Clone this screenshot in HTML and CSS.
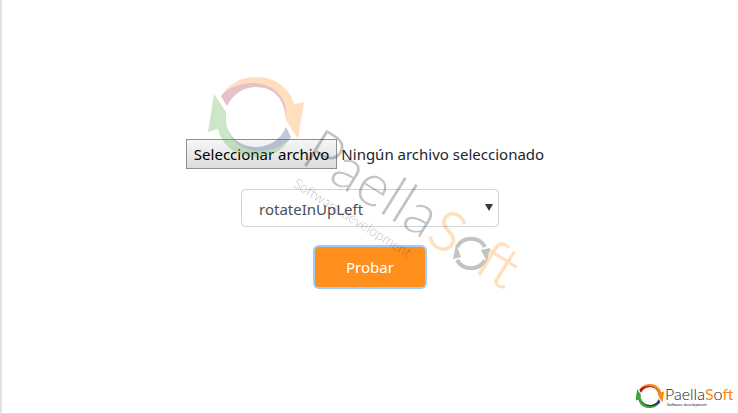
FILE: index.html
```html
<!DOCTYPE html>
<html lang="es">

<head>
  <meta charset="UTF-8">
  <meta name="viewport" content="width=device-width, initial-scale=1.0">
  <title>PaellaSoft</title>
  <link rel="stylesheet" href="styles.css">
</head>

<body>
  <main class="page">
    <form class="demo">
      <!-- Archivo -->
      <div class="file-field">
        <label class="file-button" for="archivo">Seleccionar archivo</label>
        <span class="file-name">Ningún archivo seleccionado</span>
        <input class="file-input" type="file" id="archivo">
      </div>

      <!-- Animación -->
      <div class="select-field">
        <select class="select" id="animacion" aria-label="Animación">
          <option selected>rotateInUpLeft</option>
          <option>rotateInUpRight</option>
          <option>rotateInDownLeft</option>
          <option>rotateInDownRight</option>
        </select>
      </div>

      <button class="btn" type="button">Probar</button>

      <!-- Logo animado -->
      <svg class="logo-big" viewBox="200 70 340 230" aria-hidden="true">
        <defs>
          <g id="ring">
            <path fill="#ff8a12" d="M221 96C228 84 241 77 256 77C275 77 290 88 294 104L304 102L298 139L286 120C288 99 274 87 256 87C243 87 233 94 227 106Z" />
            <path fill="#a01c38" d="M221 96C231 85 244 83 255 83C269 84 279 91 283 100Q287 108 286 120C285 99 274 87 256 87C243 87 233 94 227 106Z" />
            <path fill="#3fa535" d="M214 94L226 112V122C228 137 241 147 256 147C271 147 282 141 291 137C284 150 271 157 256 157C237 157 222 146 218 129L208 132Z" />
            <path fill="#1c3670" d="M226 122C228 137 240 147 256 147C270 147 281 139 286 127L291 137C284 146 271 151 257 151C241 150 229 141 226 122Z" />
          </g>
          <g id="arrows">
            <path fill="none" stroke="currentColor" stroke-width="4" d="M457 247A16 16 0 0 1 485 247M485 260A16 16 0 0 1 457 260" />
            <path fill="currentColor" d="M456 244L461 257L453 259ZM487 262L481 250L490 248Z" />
          </g>
        </defs>
        <use href="#ring" />
        <g transform="translate(304 165) rotate(32)">
          <text class="word" x="-6" y="0">Paella</text>
          <text class="word word-accent" x="142" y="0">S</text>
          <text class="word word-accent" x="199" y="0">ft</text>
          <text class="tagline" x="1" y="24">Software development</text>
        </g>
        <use href="#arrows" />
      </svg>
    </form>

    <!-- Logo fijo -->
    <footer class="footer">
      <svg class="logo-small" viewBox="0 0 98 28" role="img" aria-label="PaellaSoft">
        <use href="#ring" transform="translate(-63 -21) scale(.3)" />
        <text class="small-word" x="29" y="18">Paella<tspan class="small-accent">S</tspan>o<tspan class="small-accent">ft</tspan></text>
        <text class="small-tagline" x="31" y="24">Software development</text>
      </svg>
    </footer>
  </main>
</body>

</html>
```

FILE: styles.css
```css
* {
  box-sizing: border-box;
}

body {
  margin: 0;
  background: #fff;
  color: #212529;
  font-family: "Noto Sans", "Open Sans", sans-serif;
  font-size: 15px;
  line-height: 24px;
}

.page {
  display: flex;
  flex-direction: column;
  min-height: 100vh;
  border-left: 2px solid #e3e3e3;
  border-bottom: 1px solid #dcdcdc;
}

/* Formulario */
.demo {
  position: relative;
  flex: 1;
  display: flex;
  flex-direction: column;
  align-items: center;
  gap: 20px;
  padding-top: 139px;
}

.file-field {
  position: relative;
  display: flex;
  align-items: center;
  gap: 4px;
  margin-right: 10px;
}

.file-button {
  padding: 2px 7px;
  border: 1px solid #8f8f8f;
  background: linear-gradient(#f6f6f6, #dcdcdc);
  color: #000;
}

/* El input real queda encima, transparente */
.file-input {
  position: absolute;
  inset: 0;
  width: 100%;
  opacity: 0;
  cursor: pointer;
}

.select-field {
  position: relative;
  width: 258px;
}

.select-field::after {
  content: "";
  position: absolute;
  top: 15px;
  right: 6px;
  border: 4px solid transparent;
  border-top: 7px solid #343a40;
  border-bottom: 0;
  pointer-events: none;
}

.select {
  appearance: none;
  width: 100%;
  height: 38px;
  padding: 4px 17px 2px;
  border: 1px solid #ced4da;
  border-radius: 4px;
  background: #fff;
  color: #495057;
  font: inherit;
}

.btn {
  height: 40px;
  padding: 0 31px;
  border: 0;
  border-radius: 4px;
  background: #ff8f1c;
  box-shadow: 0 0 0 2px #99ccff;
  color: #fff;
  font: inherit;
}

/* Logo grande sobre el formulario */
.logo-big {
  position: absolute;
  top: 70px;
  left: calc(50% - 170px);
  width: 340px;
  height: 230px;
  color: #222;
  opacity: 0.27;
  pointer-events: none;
}

.word {
  fill: #222;
  font-family: Lato, sans-serif;
  font-size: 59px;
  font-weight: 300;
}

.word-accent {
  fill: #ff8a12;
  stroke: #ff8a12;
  stroke-width: 1px;
  font-size: 56px;
}

.tagline {
  fill: #222;
  font-family: Lato, sans-serif;
  font-size: 14px;
  font-weight: 300;
}

/* Pie */
.footer {
  display: flex;
  justify-content: flex-end;
  padding: 0 4px 3px 0;
}

.logo-small {
  width: 98px;
  height: 28px;
}

.small-word {
  fill: #222;
  font-family: Lato, sans-serif;
  font-size: 16px;
  font-weight: 300;
}

.small-accent {
  fill: #ff8a12;
  font-weight: 400;
}

.small-tagline {
  fill: #222;
  font-family: Lato, sans-serif;
  font-size: 4px;
}
```
